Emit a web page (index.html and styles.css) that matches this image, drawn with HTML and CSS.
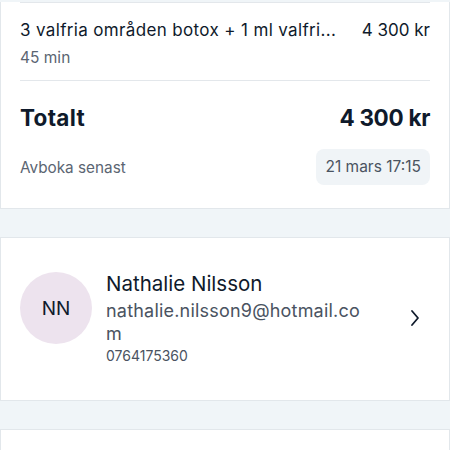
FILE: index.html
```html
<!DOCTYPE html>
<html lang="sv">
<head>
    <meta charset="UTF-8">
    <meta name="viewport" content="width=device-width, initial-scale=1.0">
    <title>Bokning</title>
    <link rel="stylesheet" href="styles.css">
</head>
<body>
    <div class="card summary">
        <div class="divider first"></div>
        <div class="row item">
            <span class="item-name">3 valfria områden botox + 1 ml valfri...</span>
            <span class="item-price">4 300 kr</span>
        </div>
        <div class="duration">45 min</div>
        <div class="divider"></div>
        <div class="row total">
            <span class="total-label">Totalt</span>
            <span class="total-sum">4 300 kr</span>
        </div>
        <div class="row cancel">
            <span class="cancel-label">Avboka senast</span>
            <span class="pill">21 mars 17:15</span>
        </div>
    </div>

    <div class="card customer">
        <div class="avatar">NN</div>
        <div class="customer-info">
            <div class="customer-name">Nathalie Nilsson</div>
            <div class="customer-email">nathalie.nilsson9@hotmail.com</div>
            <div class="customer-phone">0764175360</div>
        </div>
        <svg class="chevron" width="10" height="18" viewBox="0 0 10 18">
            <path d="M2 2 L8 9 L2 16" fill="none" stroke="#0f1a2b" stroke-width="1.8" stroke-linecap="round" stroke-linejoin="round"/>
        </svg>
    </div>

    <div class="card next"></div>
</body>
</html>
```

FILE: styles.css
```css
body {
    margin: 0;
    background-color: #f0f5f8;
    font-family: Inter, "Open Sans", sans-serif;
    color: #0f1a2b;
}
.card {
    background-color: #fff;
    border: 1px solid #e2e7eb;
}
.summary {
    border-top: none;
    padding: 0 19px 0 19px;
    height: 206px;
}
.divider {
    height: 1px;
    background-color: #e3e7eb;
    margin-top: 12px;
}
.divider.first {
    margin-top: 2px;
}
.row {
    display: flex;
    justify-content: space-between;
    align-items: center;
}
.item {
    margin-top: 15px;
    font-size: 17px;
    line-height: 24px;
}
.item-name {
    letter-spacing: 0.35px;
}
.duration {
    margin-top: 6px;
    font-size: 15.5px;
    line-height: 20px;
    color: #5b6572;
}
.total {
    margin-top: 23px;
    font-size: 22.5px;
    line-height: 28px;
    font-weight: 700;
}
.total-label {
    letter-spacing: 0.3px;
}
.total-sum {
    letter-spacing: -0.3px;
}
.cancel {
    margin-top: 17px;
    font-size: 15.3px;
    color: #5b6572;
}
.pill {
    background-color: #f0f4f7;
    border-radius: 8px;
    padding: 0 9px;
    height: 36px;
    line-height: 36px;
    font-size: 15.5px;
    color: #4a5361;
}
.customer {
    margin-top: 28px;
    display: flex;
    align-items: flex-start;
    padding: 34px 19px 0 19px;
    height: 128px;
}
.avatar {
    width: 72px;
    height: 72px;
    border-radius: 50%;
    background-color: #ede3ee;
    display: flex;
    align-items: center;
    justify-content: center;
    font-size: 19px;
    flex-shrink: 0;
}
.customer-info {
    margin-left: 14px;
    width: 258px;
}
.customer-name {
    font-size: 20.5px;
    line-height: 24px;
}
.customer-email {
    margin-top: 3px;
    font-size: 18px;
    line-height: 23px;
    letter-spacing: 0.2px;
    color: #4a5361;
    word-break: break-all;
}
.customer-phone {
    font-size: 14px;
    line-height: 22px;
    color: #4a5361;
}
.chevron {
    margin-left: auto;
    margin-right: 10px;
    align-self: center;
    margin-top: -36px;
}
.next {
    margin-top: 28px;
    height: 60px;
}
```
